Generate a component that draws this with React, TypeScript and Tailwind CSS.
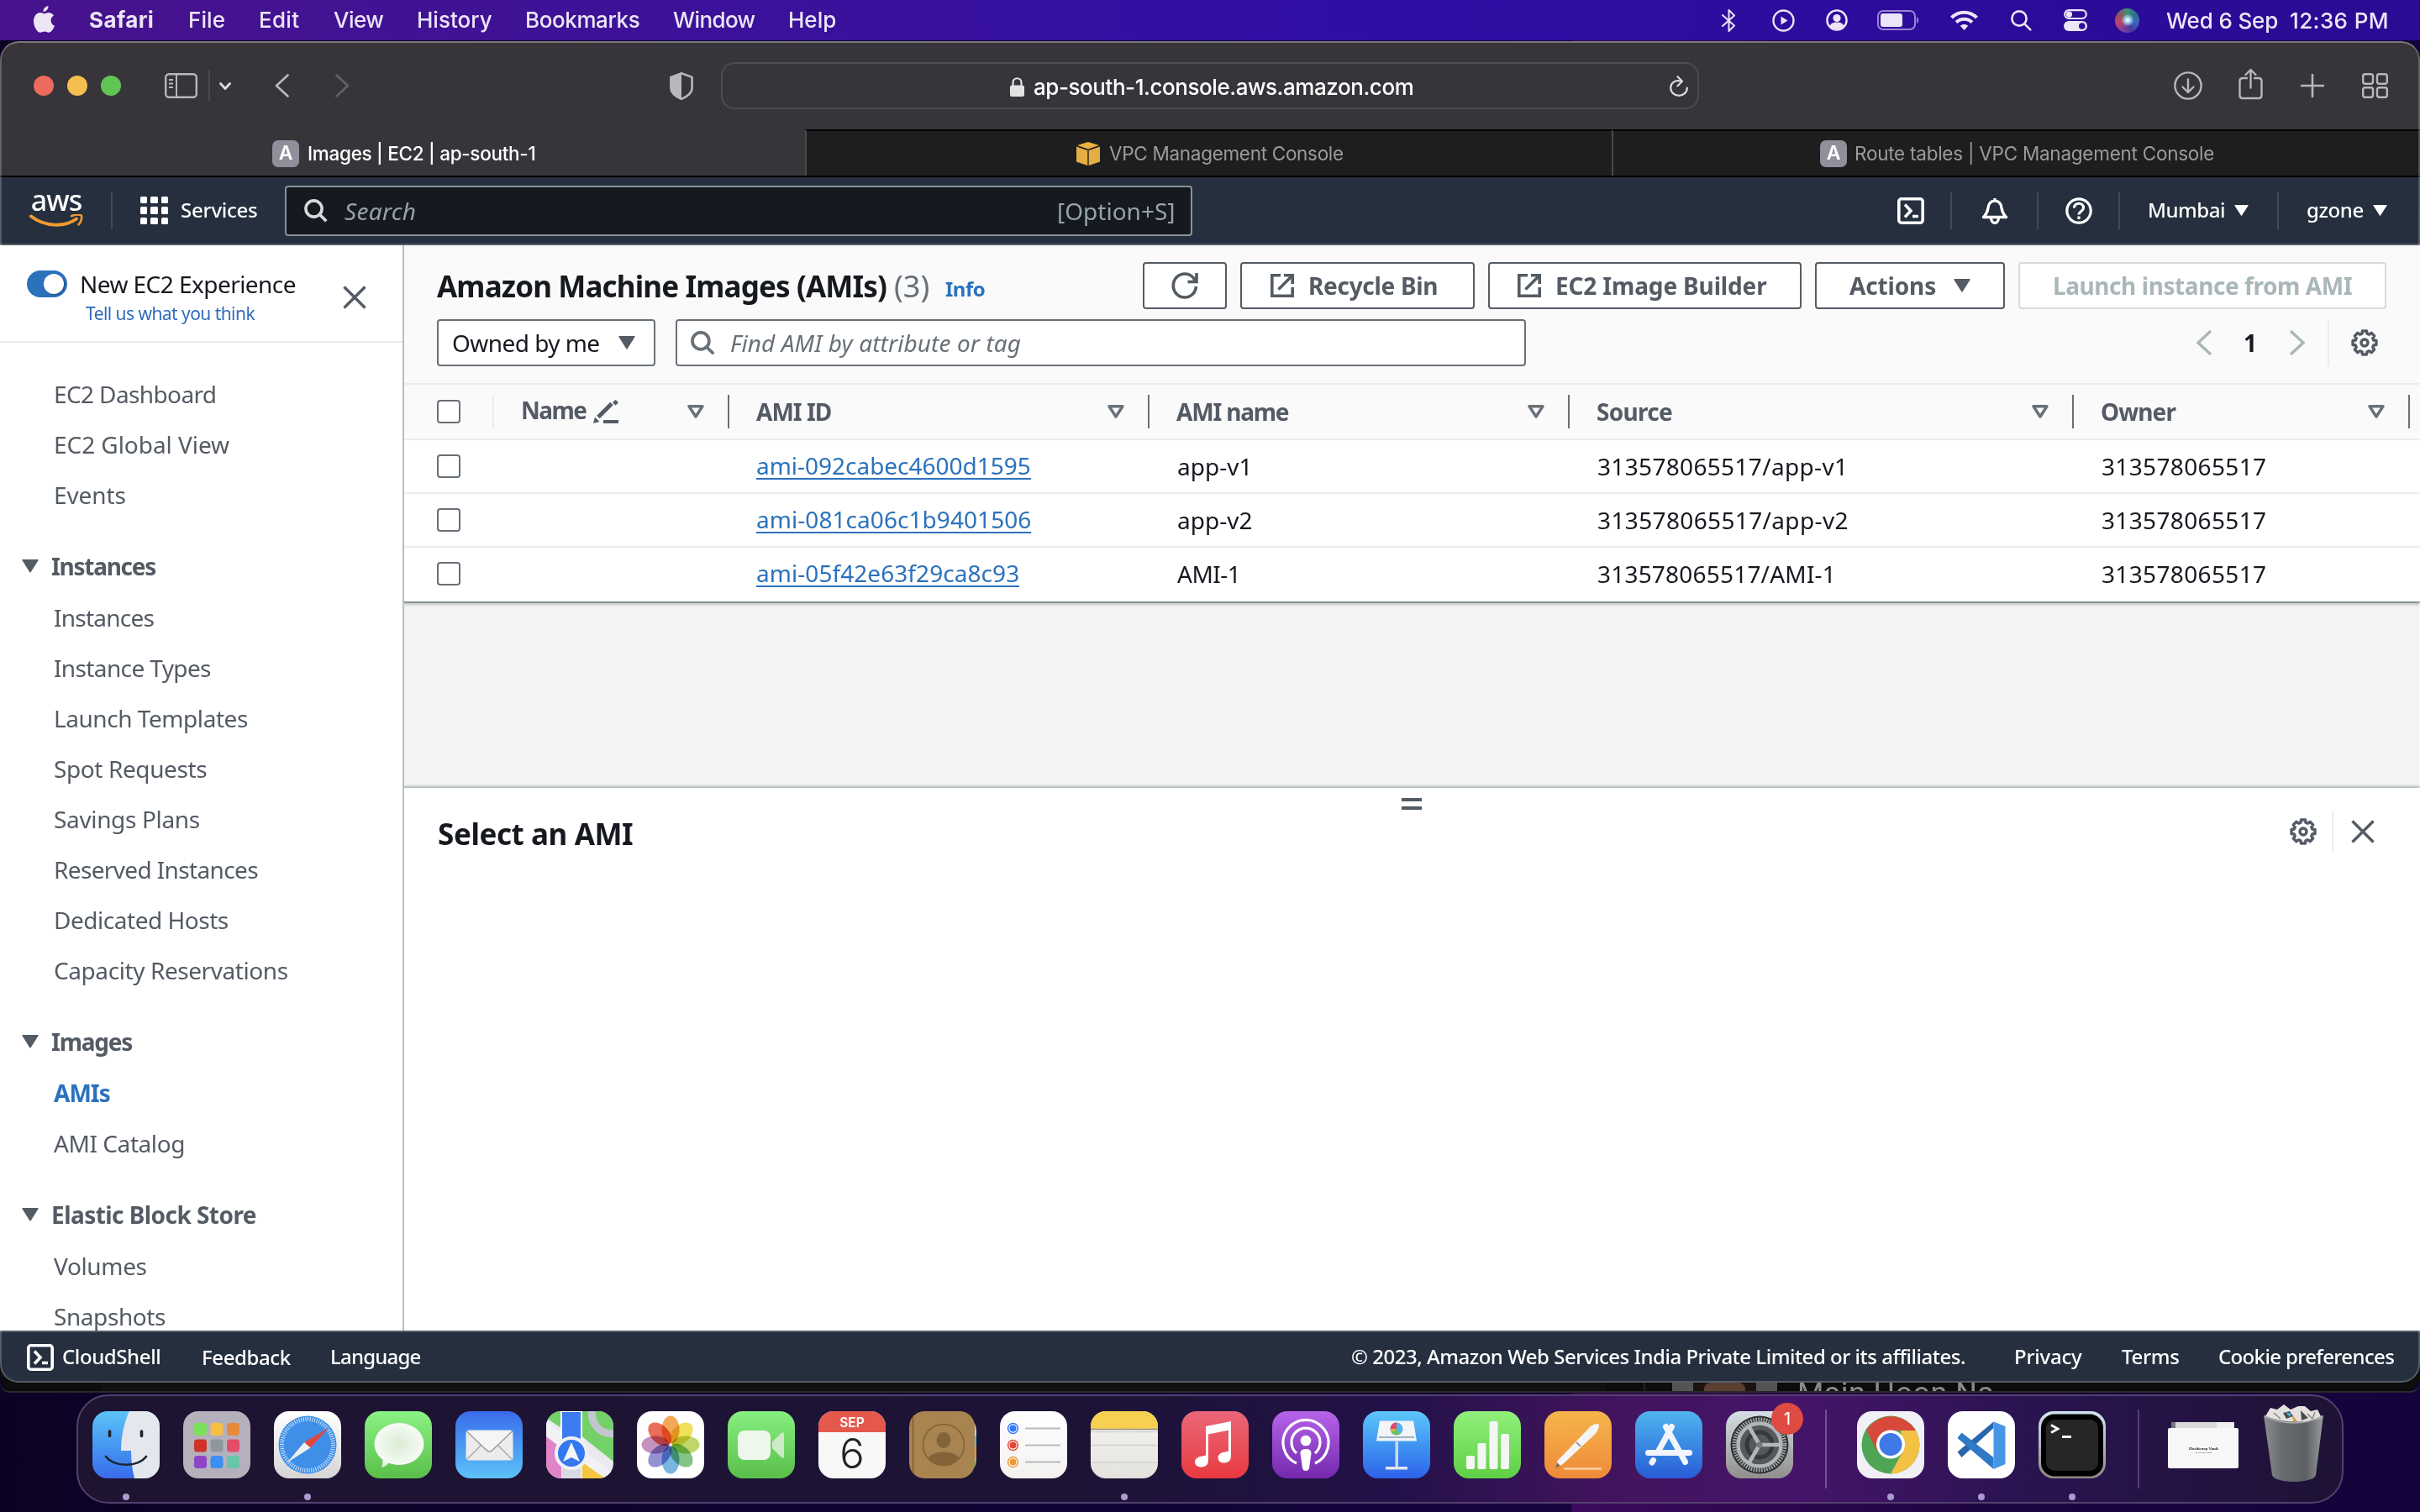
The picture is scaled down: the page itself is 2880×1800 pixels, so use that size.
import React from "react";

const EMBER = "font-['Noto_Sans','Open_Sans',sans-serif]";
const SYS = "font-['Inter','Liberation_Sans',sans-serif]";

function T({ c = "", children }: { c?: string; children: React.ReactNode }) {
  return <span className={"block shrink-0 whitespace-nowrap " + c}>{children}</span>;
}

function Down({ c = "" }: { c?: string }) {
  return (
    <svg viewBox="0 0 20 16" className={"shrink-0 " + c} fill="currentColor" preserveAspectRatio="none">
      <path d="M1 0h18q1 0 .6 1L10.8 15q-.8 1.600-1.600 0L.4 1Q0 0 1 0z" />
    </svg>
  );
}

/* ---------- desktop menu bar ---------- */
function MenuBar() {
  return (
    <div className={"flex h-[48px] shrink-0 items-center bg-linear-to-r from-[#47128c] via-[#300da5] via-55% to-[#2a0a93] pb-[2px] text-[26px] font-medium text-[#ebe5f6] " + SYS}>
      <svg viewBox="0 0 25 32" className="ml-[40px] h-[32px] w-[25px]" fill="currentColor">
        <path d="M17.500 0c.2 3.800-2.900 7-6 7C11.200 3.500 14.300.4 17.500 0zM12.800 9.200c1.200 0 2.800-1.300 5.200-1.300 2.200 0 4.600 1.200 6 3.500-5 2.900-4.300 10 1 12.300-1.500 4-4.200 8-7 8-2 0-2.900-1.200-5-1.200-2.200 0-3.200 1.200-5 1.200C4 31.700 0 24.500 0 18.500 0 12 4 8 8 8c2.100 0 3.700 1.200 4.800 1.200z" />
      </svg>
      <div className="ml-[41px] flex gap-[39px] pt-[1px]">
        <T c="w-[79px] font-bold tracking-[0.400px]">Safari</T>
        <T c="w-[45px] tracking-[0.100px]">File</T>
        <T c="w-[50px] tracking-[0.300px]">Edit</T>
        <T c="w-[60px] tracking-[-0.500px]">View</T>
        <T c="w-[90px]">History</T>
        <T c="w-[137px] tracking-[-0.400px]">Bookmarks</T>
        <T c="w-[98px] tracking-[-0.600px]">Window</T>
        <T c="w-[58px]">Help</T>
      </div>
      <div className="ml-auto flex items-center pr-[37px] pt-[2px]">
        <svg viewBox="0 0 17 27" className="h-[27px] w-[17px]" fill="none" stroke="currentColor" strokeWidth="2" strokeLinejoin="round" strokeLinecap="round"><path d="M1 7l14 12.500L8.500 26V1L15 7.500 1 20" /></svg>
        <svg viewBox="0 0 27 27" className="ml-[43px] size-[27px]" fill="none" stroke="currentColor" strokeWidth="2.400"><circle cx="13.500" cy="13.500" r="12" /><path d="M10.500 8.500v10l8-5z" fill="currentColor" stroke="none" /></svg>
        <svg viewBox="0 0 26 26" className="ml-[37px] size-[26px]" fill="none" stroke="currentColor" strokeWidth="2.400"><circle cx="13" cy="13" r="11.600" /><circle cx="13" cy="10.500" r="4.600" fill="currentColor" stroke="none" /><path d="M4.500 20c2-4 5-4.500 8.500-4.500s6.500.5 8.500 4.500c-4 5-13 5-17 0z" fill="currentColor" stroke="none" /></svg>
        <svg viewBox="0 0 50 24" className="ml-[35px] h-[24px] w-[50px]" fill="none"><rect x="1" y="1" width="44" height="22" rx="6" stroke="#9b84d4" strokeWidth="2" /><rect x="4" y="4" width="26" height="16" rx="3" fill="currentColor" /><path d="M47 8c3 1.500 3 6.500 0 8z" fill="#9b84d4" /></svg>
        <svg viewBox="0 0 33 24" className="ml-[37px] h-[24px] w-[33px]" fill="none" stroke="currentColor" strokeWidth="4"><path d="M1.500 9C10 .5 23 .5 31.500 9" /><path d="M7 14.500c5.500-5 13.500-5 19 0" /><path d="M16.500 24l-4.700-5.200c2.700-2.300 6.700-2.300 9.400 0z" fill="currentColor" stroke="none" /></svg>
        <svg viewBox="0 0 25 25" className="ml-[39px] size-[25px]" fill="none" stroke="currentColor" strokeWidth="2.600" strokeLinecap="round"><circle cx="10" cy="10" r="8.600" /><path d="M16.300 16.300l7 7" /></svg>
        <svg viewBox="0 0 28 26" className="ml-[38px] h-[26px] w-[28px]" fill="none"><rect x="1.200" y="1.200" width="25.600" height="9.800" rx="4.900" stroke="currentColor" strokeWidth="2.200" /><circle cx="6.500" cy="6.100" r="3.600" fill="currentColor" /><rect y="14" width="28" height="12" rx="6" fill="currentColor" /><circle cx="21.800" cy="20" r="3.800" fill="#2d0c99" /></svg>
        <div className="ml-[33px] size-[29px] rounded-full bg-[radial-gradient(circle_at_52%_48%,#fff_0%,#a9d8ee_14%,transparent_36%),conic-gradient(from_0deg,#3f8f76,#2d6f86,#3a63c4,#473a9c,#7d3f9e,#c2416a,#8c5560,#3f8f76)]" />
        <T c="ml-[32px] w-[134px] tracking-[-0.150px]">Wed 6 Sep</T>
        <T c="ml-[13px] w-[118px] tracking-[0.400px]">12:36 PM</T>
      </div>
    </div>
  );
}

/* ---------- browser chrome ---------- */
function Toolbar() {
  return (
    <div className={"flex h-[104px] shrink-0 items-center text-[#b9b7bc] " + SYS}>
      <div className="ml-[40px] flex gap-[16px]">
        <div className="size-[24px] rounded-full bg-[#ec6a5e]" />
        <div className="size-[24px] rounded-full bg-[#f4bf4f]" />
        <div className="size-[24px] rounded-full bg-[#61c554]" />
      </div>
      <svg viewBox="0 0 39 30" className="ml-[52px] h-[30px] w-[39px]" fill="none" stroke="currentColor" strokeWidth="2.400"><rect x="1.200" y="1.200" width="36.600" height="27.600" rx="4" /><path d="M14 1v28M5 8h5M5 12.500h5M5 17h5" strokeWidth="2" /></svg>
      <div className="ml-[13px] h-[36px] w-[2px] bg-[#4c4a4f]" />
      <svg viewBox="0 0 14 9" className="ml-[11px] h-[9px] w-[14px]" fill="none" stroke="#dddbe0" strokeWidth="2.800" strokeLinecap="round" strokeLinejoin="round"><path d="M1.500 1.500L7 7.500l5.500-6" /></svg>
      <svg viewBox="0 0 17 28" className="ml-[52px] h-[28px] w-[17px]" fill="none" stroke="currentColor" strokeWidth="2.600" strokeLinecap="round" strokeLinejoin="round"><path d="M15.500 1.500L2 14l13.500 12.500" /></svg>
      <svg viewBox="0 0 17 28" className="ml-[55px] h-[28px] w-[17px] text-[#636166]" fill="none" stroke="currentColor" strokeWidth="2.600" strokeLinecap="round" strokeLinejoin="round"><path d="M1.500 1.500L15 14 1.500 26.500" /></svg>
      <svg viewBox="0 0 28 33" className="ml-[381px] h-[33px] w-[28px]" fill="none"><path d="M14 1.300l12.600 4.600v13c0 6-6 10-12.600 13-6.600-3-12.600-7-12.600-13v-13z" stroke="currentColor" strokeWidth="2.600" strokeLinejoin="round" /><path d="M14 1.300v30.600c-6.600-3-12.600-7-12.600-13v-13z" fill="currentColor" /></svg>
      <div className="ml-[33px] flex h-[56px] w-[1164px] items-center rounded-[16px] border-2 border-[#4e4c51]">
        <svg viewBox="0 0 17 23" className="ml-[342px] mt-[2px] h-[23px] w-[17px] text-[#e3e2e4]" fill="none"><rect y="9.500" width="17" height="13.500" rx="2.500" fill="currentColor" /><path d="M3.500 10V6.500c0-7 10-7 10 0V10" stroke="currentColor" strokeWidth="2.200" /></svg>
        <T c="ml-[11px] w-[452px] pt-[3px] text-[26px] font-medium tracking-[-0.450px] text-white">ap-south-1.console.aws.amazon.com</T>
        <svg viewBox="0 0 22 25" className="ml-auto mr-[11px] h-[25px] w-[22px] text-[#dcdadf]" fill="none" stroke="currentColor" strokeWidth="2.200" strokeLinecap="round" strokeLinejoin="round"><path d="M13 6.500C6 4.800 1.200 9 1.200 14.500c0 5.200 4.300 9.300 9.800 9.300s9.800-4.100 9.800-9.300M9.500 1.200l5.500 5.600-5.500 5.500" /></svg>
      </div>
      <div className="ml-auto flex items-center pr-[38px]">
        <svg viewBox="0 0 34 34" className="size-[34px]" fill="none" stroke="currentColor" strokeWidth="2.400" strokeLinecap="round" strokeLinejoin="round"><circle cx="17" cy="17" r="15.600" /><path d="M17 9.500v15M10.500 18.500l6.500 6.500 6.500-6.500" /></svg>
        <svg viewBox="0 0 29 38" className="mb-[5px] ml-[43px] h-[38px] w-[29px]" fill="none" stroke="currentColor" strokeWidth="2.400" strokeLinecap="round" strokeLinejoin="round"><path d="M10 12H5q-3.500 0-3.500 3.500v17Q1.500 36 5 36h19q3.500 0 3.500-3.500v-17Q27.500 12 24 12h-5M14.500 23.500V2M8.500 8l6-6 6 6" /></svg>
        <svg viewBox="0 0 28 28" className="ml-[45px] size-[28px]" fill="none" stroke="currentColor" strokeWidth="2.600" strokeLinecap="round"><path d="M14 1v26M1 14h26" /></svg>
        <svg viewBox="0 0 31 30" className="ml-[45px] h-[30px] w-[31px]" fill="none" stroke="currentColor" strokeWidth="2.400"><rect x="1.200" y="1.200" width="11.800" height="11.600" rx="2.500" /><rect x="18" y="1.200" width="11.800" height="11.600" rx="2.500" /><rect x="1.200" y="17.200" width="11.800" height="11.600" rx="2.500" /><rect x="18" y="17.200" width="11.800" height="11.600" rx="2.500" /></svg>
      </div>
    </div>
  );
}

function Letter() {
  return <div className="flex size-[32px] items-center justify-center rounded-[7px] bg-[#90909c] text-[23px] font-semibold leading-none text-white">A</div>;
}

function Tabs() {
  return (
    <div className={"flex h-[57px] shrink-0 border-b-2 border-black text-[22.500px] " + SYS}>
      <div className="flex w-[958px] items-center gap-[10px] pl-[324px] pt-[2px] font-medium text-white">
        <Letter />
        <T c="w-[273px] tracking-[-0.300px]">Images | EC2 | ap-south-1</T>
      </div>
      <div className="flex w-[960px] items-center border-l-2 border-t-2 border-l-[#4a484d] border-t-black bg-[#1e1e1f] pl-[321px] text-[#9b9b9c]">
        <svg viewBox="0 0 28 28" className="size-[28px]" strokeLinejoin="round"><path d="M14 0l13 4-13 4.500L1 4z" fill="#edb13f" /><path d="M0 5.500L13 10v18L0 23.500zM28 5.500L15 10v18l13-4.500z" fill="#e5ae44" /><path d="M14 8.500V28" stroke="#7a5a1e" strokeWidth="1.500" /></svg>
        <T c="ml-[11px] w-[281px] tracking-[-0.300px]">VPC Management Console</T>
      </div>
      <div className="flex w-[962px] items-center border-l-2 border-t-2 border-l-[#4a484d] border-t-black bg-[#1e1e1f] pl-[246px] text-[#9b9b9c]">
        <Letter />
        <T c="ml-[9px] w-[431px] tracking-[-0.250px]">Route tables | VPC Management Console</T>
      </div>
    </div>
  );
}

/* ---------- AWS console ---------- */
function ShellIcon({ c = "" }: { c?: string }) {
  return (
    <svg viewBox="0 0 32 32" className={"size-[32px] shrink-0 " + c} fill="none" stroke="currentColor" strokeWidth="3.600">
      <rect x="1.800" y="1.800" width="28.400" height="28.400" rx="3" /><path d="M9 8.500l7 7.500-7 7.500M18 22.500h7" />
    </svg>
  );
}

function SearchGlyph({ c = "" }: { c?: string }) {
  return (
    <svg viewBox="0 0 28 28" className={"shrink-0 " + c} fill="none" stroke="currentColor" strokeWidth="3.600"><circle cx="11.500" cy="11.500" r="9.600" /><path d="M18.300 18.300l8 8" /></svg>
  );
}

function Sep({ c = "" }: { c?: string }) {
  return <div className={"h-[44px] w-[2px] shrink-0 bg-[#414b57] " + c} />;
}

function AwsNav() {
  return (
    <div className={"flex h-[81px] shrink-0 items-center border-b-2 border-[#545b66] bg-[#252f3e] text-[24px] font-medium text-white " + EMBER}>
      <div className="ml-[35px] flex w-[64px] flex-col items-center">
        <span className="h-[22px] text-[34px] font-medium leading-[16px] tracking-[-1px]">aws</span>
        <svg viewBox="0 0 64 16" className="mt-[3px] h-[16px] w-[64px]" fill="none"><path d="M2 2.500C18 15 42 16 56 5.500" stroke="#f09a30" strokeWidth="4" strokeLinecap="round" /><path d="M50 2.200c4-1.800 9-2 12-.6.5 4-.7 7.800-3.500 10.700" stroke="#f09a30" strokeWidth="2.600" strokeLinecap="round" strokeLinejoin="round" /></svg>
      </div>
      <Sep c="ml-[33px]" />
      <div className="ml-[33px] grid size-[33px] grid-cols-3 gap-[4px]">
        {[0, 1, 2, 3, 4, 5, 6, 7, 8].map((i) => <div key={i} className="rounded-[1.500px] bg-white" />)}
      </div>
      <T c="ml-[15px] w-[92px] pb-[2px] tracking-[-0.250px]">Services</T>
      <div className="ml-[32px] flex h-[60px] w-[1080px] items-center rounded-[4px] border-2 border-[#879596] bg-[#16191f] text-[28px] font-normal text-[#95a5a6]">
        <SearchGlyph c="ml-[21px] size-[28px] text-[#d5dbdb]" />
        <T c="ml-[20px] w-[86px] italic tracking-[0.300px]">Search</T>
        <T c="ml-auto mr-[17px] w-[142px]">[Option+S]</T>
      </div>
      <div className="ml-auto flex items-center pr-[39px]">
        <ShellIcon />
        <Sep c="ml-[31px]" />
        <svg viewBox="0 0 32 32" className="ml-[35px] size-[32px]" fill="none" stroke="currentColor" strokeWidth="3.400" strokeLinejoin="round"><path d="M16 1v3M2.500 23.500c4-4 5-7 5.500-11C8.500 7 12 4 16 4s7.500 3 8 8.500c.5 4 1.500 7 5.500 11zM11.500 24c0 8.500 9 8.500 9 0" /></svg>
        <Sep c="ml-[34px]" />
        <svg viewBox="0 0 32 32" className="ml-[32px] size-[32px]" fill="none" stroke="currentColor" strokeWidth="3.200"><circle cx="16" cy="16" r="14.200" /><path d="M10.500 12.500c0-7 11-7 11 0 0 4-5.500 4-5.500 8M16 22.500v3.500" /></svg>
        <Sep c="ml-[31px]" />
        <T c="ml-[33px] w-[92px] pb-[2px] tracking-[-0.500px]">Mumbai</T>
        <Down c="ml-[11px] h-[13px] w-[17px]" />
        <Sep c="ml-[34px]" />
        <T c="ml-[33px] w-[69px] pb-[2px] tracking-[-0.400px]">gzone</T>
        <Down c="ml-[10px] h-[13px] w-[17px]" />
      </div>
    </div>
  );
}

function Cross({ c = "" }: { c?: string }) {
  return <svg viewBox="0 0 28 28" className={"size-[28px] shrink-0 " + c} fill="none" stroke="#545b64" strokeWidth="3.400"><path d="M1.500 1.500l25 25M26.500 1.500l-25 25" /></svg>;
}

const gearPath = (() => {
  let d = "";
  for (let i = 0; i < 8; i++) {
    const a = (i * Math.PI) / 4 - Math.PI / 2;
    const pt = (r: number, o: number) => `${(16 + r * Math.cos(a + o)).toFixed(2)} ${(16 + r * Math.sin(a + o)).toFixed(2)}`;
    d += `${i ? "L" : "M"}${pt(11.2, -0.27)}L${pt(14.2, -0.18)}L${pt(14.2, 0.18)}L${pt(11.2, 0.27)}`;
  }
  return d + "Z";
})();

function Gear({ c = "" }: { c?: string }) {
  return (
    <svg viewBox="0 0 32 32" className={"size-[32px] shrink-0 " + c} fill="none" stroke="#545b64" strokeWidth="3.400" strokeLinejoin="round"><path d={gearPath} /><circle cx="16" cy="16" r="4" /></svg>
  );
}

function SideHead({ c, label }: { c: string; label: string }) {
  return (
    <div className="flex h-[60px] items-center pl-[26px] font-bold">
      <Down c="h-[16px] w-[20px]" />
      <T c={"ml-[15px] " + c}>{label}</T>
    </div>
  );
}

function SideItems({ items }: { items: [string, string][] }) {
  return (
    <>
      {items.map(([label, c]) => (
        <div key={label} className="flex h-[60px] items-center pb-[2px] pl-[64px]"><T c={c}>{label}</T></div>
      ))}
    </>
  );
}

function Sidebar() {
  return (
    <div className="z-10 flex w-[481px] shrink-0 flex-col overflow-hidden border-r-2 border-[#b9bfc3] bg-white text-[28px] text-[#545b64]">
      <div className="flex h-[116px] shrink-0 border-b-2 border-[#eaeded]">
        <div className="ml-[32px] mt-[30px] flex h-[32px] w-[48px] justify-end rounded-full bg-[#2b72bd] p-[4px]"><div className="size-[24px] rounded-full bg-white shadow-[1px_1px_2px_#0006]" /></div>
        <div className="ml-[15px] mt-[26px]">
          <T c="w-[258px] leading-[40px] tracking-[-0.550px] text-[#16191f]">New EC2 Experience</T>
          <T c="ml-[7px] w-[201px] text-[21px] leading-[30px] tracking-[-0.550px] text-[#2f6bbd]">Tell us what you think</T>
        </div>
        <Cross c="ml-[55px] mt-[48px]" />
      </div>
      <div className="shrink-0 pt-[32px]">
        <SideItems items={[["EC2 Dashboard", "tracking-[-0.620px]"], ["EC2 Global View", "tracking-[-0.050px]"], ["Events", "tracking-[-0.100px]"]]} />
        <div className="h-[24px]" />
        <SideHead label="Instances" c="tracking-[-1.280px]" />
        <div className="h-[2px]" />
        <SideItems items={[["Instances", "tracking-[-0.750px]"], ["Instance Types", "tracking-[-0.620px]"], ["Launch Templates", "tracking-[-0.450px]"], ["Spot Requests", "tracking-[-0.400px]"], ["Savings Plans", "tracking-[-0.350px]"], ["Reserved Instances", "tracking-[-0.640px]"], ["Dedicated Hosts", "tracking-[-0.470px]"], ["Capacity Reservations", "tracking-[-0.420px]"]]} />
        <div className="h-[24px]" />
        <SideHead label="Images" c="tracking-[-1.240px]" />
        <div className="h-[2px]" />
        <SideItems items={[["AMIs", "tracking-[-1px] font-bold text-[#2b72bd]"], ["AMI Catalog", "tracking-[-0.430px]"]]} />
        <div className="h-[24px]" />
        <SideHead label="Elastic Block Store" c="tracking-[-0.550px]" />
        <div className="h-[2px]" />
        <SideItems items={[["Volumes", "tracking-[-0.350px]"], ["Snapshots", "tracking-[-0.420px]"]]} />
      </div>
    </div>
  );
}

function External() {
  return <svg viewBox="0 0 28 28" className="size-[28px] shrink-0" fill="none" stroke="currentColor" strokeWidth="3.600"><path d="M12 1.800H1.800v24.400h24.400V16M16 1.800h10.200V12M26 2L9.500 18.500" /></svg>;
}

function Btn({ c, children }: { c: string; children: React.ReactNode }) {
  return <div className={"flex h-[56px] shrink-0 items-center rounded-[4px] border-2 bg-white text-[28px] font-bold " + c}>{children}</div>;
}

function Box() {
  return <div className="size-[28px] rounded-[4px] border-2 border-[#687078] bg-white" />;
}

function HeadCell({ w, c, label }: { w: string; c: string; label: string }) {
  return (
    <div className={"flex items-center " + w}>
      <T c={c}>{label}</T>
      {label === "Name" && (
        <svg viewBox="0 0 30 28" className="ml-[8px] h-[28px] w-[30px]" fill="none" stroke="currentColor"><path d="M6 20.500L22 4.500" strokeWidth="5" /><path d="M23.500 3.200l3-3 3 3-3 3z" fill="currentColor" strokeWidth="1" /><path d="M0 28l2-7.500 5.500 5.500z" fill="currentColor" stroke="none" /><path d="M12 26h18" strokeWidth="4" /></svg>
      )}
      <svg viewBox="0 0 20 16" className="ml-auto mr-[28px] h-[16px] w-[20px]" fill="none" stroke="#687078" strokeWidth="3.400" strokeLinejoin="round"><path d="M2 1.700h16L10 14z" /></svg>
      <div className="h-[40px] w-[2px] bg-[#687078]" />
    </div>
  );
}

type AmiRow = { id: string; idc: string; name: string; nc: string; src: string; sc: string; last?: boolean };

function Row({ id, idc, name, nc, src, sc, last }: AmiRow) {
  return (
    <div className={"flex shrink-0 items-center border-b-2 bg-white text-[#16191f] " + (last ? "h-[66px] border-[#879596] pb-[2px] shadow-[0_2px_3px_#0003]" : "h-[64px] border-[#eaeded]")}>
      <div className="w-[419px] pl-[39px]"><Box /></div>
      <div className="w-[501px]"><T c={"w-max border-b-2 border-[#2b72bd] pt-[1px] leading-[29px] text-[#2b72bd] " + idc}>{id}</T></div>
      <div className="w-[500px]"><T c={nc}>{name}</T></div>
      <div className="w-[600px]"><T c={sc}>{src}</T></div>
      <T c="tracking-[0.350px]">313578065517</T>
    </div>
  );
}

function Main() {
  return (
    <div className="flex flex-1 flex-col bg-[#f2f3f3] text-[28px] text-[#545b64]">
      <div className="h-[166px] shrink-0 border-b-2 border-[#eaeded] bg-[#fafafa]">
        <div className="flex h-[76px] items-end">
          <T c="ml-[39px] w-[536px] text-[35px] font-bold leading-[54px] tracking-[-0.850px] text-[#16191f]">Amazon Machine Images (AMIs)</T>
          <T c="ml-[8px] w-[48px] text-[36px] leading-[54px] text-[#687078]">(3)</T>
          <T c="ml-[13px] w-[48px] pb-[4px] text-[24px] font-bold leading-[40px] tracking-[-0.500px] text-[#2b72bd]">Info</T>
          <div className="ml-auto flex gap-[16px] pr-[40px]">
            <Btn c="w-[100px] justify-center border-[#545b64]"><svg viewBox="0 0 32 32" className="size-[32px]" fill="none" stroke="currentColor" strokeWidth="3.600"><path d="M29.500 17c-.6 7.500-6.300 13-13.500 13C8.300 30 2.300 23.800 2.300 16S8.300 2 16 2c5.500 0 10 3 12.500 8.500M30 1v10.500H19.500" /></svg></Btn>
            <Btn c="w-[279px] border-[#545b64] pl-[34px]"><External /><T c="ml-[17px] w-[155px] tracking-[-0.300px]">Recycle Bin</T></Btn>
            <Btn c="w-[373px] border-[#545b64] pl-[33px]"><External /><T c="ml-[17px] w-[253px] tracking-[-0.150px]">EC2 Image Builder</T></Btn>
            <Btn c="w-[226px] border-[#545b64] pl-[39px]"><T c="w-[104px] tracking-[-0.150px]">Actions</T><Down c="ml-[20px] h-[16px] w-[20px]" /></Btn>
            <Btn c="w-[438px] border-[#d5dbdb] pl-[39px] text-[#aab7b8]"><T c="w-[357px] tracking-[-0.430px]">Launch instance from AMI</T></Btn>
          </div>
        </div>
        <div className="mt-[12px] flex items-center">
          <div className="ml-[39px] flex h-[56px] w-[260px] items-center rounded-[4px] border-2 border-[#687078] bg-white pl-[16px] text-[#16191f]">
            <T c="w-[176px] tracking-[-0.550px]">Owned by me</T>
            <Down c="ml-[22px] h-[16px] w-[20px] text-[#545b64]" />
          </div>
          <div className="ml-[24px] flex h-[56px] w-[1012px] items-center rounded-[4px] border-2 border-[#687078] bg-white pl-[16px] text-[#687078]">
            <SearchGlyph c="size-[29px]" />
            <T c="ml-[18px] w-[347px] italic tracking-[0.100px]">Find AMI by attribute or tag</T>
          </div>
          <div className="ml-auto flex items-center pr-[50px]">
            <svg viewBox="0 0 20 30" className="h-[30px] w-[20px]" fill="none" stroke="#aab7b8" strokeWidth="3.400"><path d="M18 1L3 15l15 14" /></svg>
            <T c="ml-[37px] w-[16px] font-bold text-[#16191f]">1</T>
            <svg viewBox="0 0 20 30" className="ml-[38px] h-[30px] w-[20px]" fill="none" stroke="#aab7b8" strokeWidth="3.400"><path d="M2 1l15 14L2 29" /></svg>
            <div className="ml-[26px] h-[56px] w-[2px] bg-[#eaeded]" />
            <Gear c="ml-[26px]" />
          </div>
        </div>
      </div>
      <div className="flex h-[66px] shrink-0 items-center border-b-2 border-[#eaeded] bg-[#fafafa] font-bold">
        <div className="flex w-[107px] items-center justify-between pl-[39px]"><Box /><div className="h-[40px] w-[2px] bg-[#eaeded]" /></div>
        <HeadCell w="w-[280px] pl-[32px]" c="w-[78px] pb-[4px] tracking-[-1.500px]" label="Name" />
        <HeadCell w="w-[500px] pl-[32px]" c="w-[90px] tracking-[-1px]" label="AMI ID" />
        <HeadCell w="w-[500px] pl-[32px]" c="w-[134px] tracking-[-1.200px]" label="AMI name" />
        <HeadCell w="w-[600px] pl-[32px]" c="w-[91px] tracking-[-0.700px]" label="Source" />
        <HeadCell w="w-[400px] pl-[32px]" c="w-[90px] tracking-[-0.900px]" label="Owner" />
      </div>
      <Row id="ami-092cabec4600d1595" idc="tracking-[-0.020px]" name="app-v1" nc="" src="313578065517/app-v1" sc="tracking-[0.330px]" />
      <Row id="ami-081ca06c1b9401506" idc="tracking-[0.060px]" name="app-v2" nc="" src="313578065517/app-v2" sc="tracking-[0.360px]" />
      <Row id="ami-05f42e63f29ca8c93" idc="tracking-[0.060px]" name="AMI-1" nc="tracking-[-0.500px]" src="313578065517/AMI-1" sc="tracking-[0.200px]" last />
      <div className="flex-1" />
      <div className="h-[648px] shrink-0 border-t-2 border-[#bcc3c5] bg-white shadow-[0_-1px_2px_#0002]">
        <div className="ml-[1187px] mt-[12px] h-[14px] w-[24px] border-y-4 border-[#545b64]" />
        <div className="flex h-[52px] items-center">
          <T c="ml-[40px] pt-[6px] text-[35px] font-bold tracking-[-0.400px] text-[#16191f]">Select an AMI</T>
          <Gear c="ml-auto" />
          <div className="ml-[18px] h-[48px] w-[2px] bg-[#eaeded]" />
          <Cross c="ml-[21px] mr-[54px]" />
        </div>
      </div>
    </div>
  );
}

function Footer() {
  return (
    <div className={"flex h-[62px] shrink-0 items-center border-t-2 border-[#545b66] bg-[#252f3e] text-[24px] font-medium text-white " + EMBER}>
      <ShellIcon c="ml-[32px]" />
      <T c="ml-[10px] w-[118px] pb-[2px] tracking-[-0.400px]">CloudShell</T>
      <T c="ml-[48px] w-[106px] tracking-[-0.400px]">Feedback</T>
      <T c="ml-[47px] w-[108px] pb-[2px] tracking-[-0.800px]">Language</T>
      <T c="ml-auto w-[732px] pb-[2px] tracking-[-0.490px]">© 2023, Amazon Web Services India Private Limited or its affiliates.</T>
      <T c="ml-[57px] w-[81px] pb-[2px] tracking-[-0.250px]">Privacy</T>
      <T c="ml-[47px] w-[69px] pb-[2px] tracking-[-0.300px]">Terms</T>
      <T c="ml-[46px] mr-[30px] w-[210px] pb-[2px] tracking-[-0.650px]">Cookie preferences</T>
    </div>
  );
}

/* ---------- dock ---------- */
function App80({ c, dot, children }: { c: string; dot?: boolean; children: React.ReactNode }) {
  return (
    <div className="relative mr-[28px] flex shrink-0 flex-col items-center">
      <svg viewBox="0 0 80 80" className={"size-[80px] rounded-[18px] " + c}>{children}</svg>
      {dot && <div className="mt-[18px] size-[8px] rounded-full bg-[#ac9bd0]" />}
    </div>
  );
}

const pads = ["#7be05a", "#f5bf45", "#e58a3a", "#cf3327", "#8d979c", "#e44d68", "#8d47c6", "#3b8ff0", "#67c6a8"];
const petals = ["#f09a37", "#ecd93c", "#b3cf50", "#6fbb72", "#62a8dc", "#8080cb", "#b87fb3", "#e8553d"];

function Dock() {
  return (
    <div className="mx-[91px] flex h-[130px] shrink-0 items-start rounded-[38px] border-2 border-[#54406e] bg-[linear-gradient(90deg,#1e1330_0%,#1d1336_45%,#221148_58%,#43145e_68%,#45146a_76%,#2a1450_86%,#1e1235_100%)] pl-[17px] pt-[18px]">
      <App80 dot c="bg-linear-to-b from-[#5cc3f7] to-[#3a6bea]">
        <path d="M44 0h36v80H50Q46 64 46 47H34C34 30 38 12 44 0z" fill="#e4e8ee" />
        <path d="M20.500 24v5.500M58.500 24v5.500" stroke="#222" strokeWidth="3.600" strokeLinecap="round" /><path d="M16 54c10 13 38 13 48 0" fill="none" stroke="#1d2430" strokeWidth="2.600" strokeLinecap="round" />
      </App80>
      <App80 c="bg-[#b4b1bd]">{pads.map((p, i) => <rect key={p} x={13 + (i % 3) * 19.5} y={14 + Math.floor(i / 3) * 19.5} width="15" height="15" rx="3.500" fill={p} />)}</App80>
      <App80 dot c="bg-linear-to-b from-white to-[#d6d6d6]">
        <circle cx="40" cy="40" r="34.500" fill="#3f8fe8" /><circle cx="40" cy="40" r="30.500" fill="none" stroke="#fff" strokeOpacity=".75" strokeWidth="5" strokeDasharray="1 1.660" />
        <path d="M65 20L43.500 43.500 36 37z" fill="#e2463c" /><path d="M16 61l20-24 7.500 6.500z" fill="#eef0f2" />
      </App80>
      <App80 c="bg-linear-to-b from-[#8af284] to-[#5abf49]">
        <defs><radialGradient id="bub"><stop offset="0" stopColor="#d9ecd3" /><stop offset="1" stopColor="#f7fbf6" /></radialGradient></defs>
        <path d="M21 58q1 5-1 9 6-1.500 9-6z" fill="#e4f3e0" /><ellipse cx="41" cy="39" rx="29.500" ry="25" fill="url(#bub)" />
      </App80>
      <App80 c="bg-linear-to-b from-[#3b6bea] to-[#5fc1f8]">
        <rect x="12.500" y="22.500" width="56" height="36" rx="4" fill="#ececec" /><path d="M14 57l19-19M67 57L48 38" stroke="#aaa" strokeWidth="1.500" /><path d="M13.500 24l23 22q4 4 8 0l23-22" fill="#f5f5f5" stroke="#9c9c9c" strokeWidth="1.500" />
      </App80>
      <App80 c="bg-[#e9eaee]">
        <path d="M0 0h18v20L0 8zM40 0h40v60L40 28z" fill="#74d069" /><path d="M0 30l18 14v36H0z" fill="#df84c8" /><path d="M43 60l32 20H43z" fill="#f4c63f" /><path d="M0 12l80 62v6H70L0 30z" fill="#f2f2f5" /><path d="M54 0c0 16 10 28 28 27" stroke="#c3c6cf" strokeWidth="9" fill="none" /><path d="M18 0h24v34H18z" fill="#3c7cf0" stroke="#fff" strokeWidth="2" /><path d="M19 62h22v18H19z" fill="#d9dbe2" />
        <circle cx="30" cy="50" r="18" fill="#3478f0" stroke="#f0f1f5" strokeWidth="4" /><path d="M30 37l10 23-10-5-10 5z" fill="#f4f6fa" />
      </App80>
      <App80 c="bg-white">
        {petals.map((p, i) => <ellipse key={p} cx="40" cy="22" rx="10.500" ry="16.500" fill={p} fillOpacity=".85" className="mix-blend-multiply" transform={`rotate(${i * 45} 40 40)`} />)}
      </App80>
      <App80 c="bg-linear-to-b from-[#86ef80] to-[#5abf49]">
        <rect x="12" y="23" width="39" height="35" rx="8" fill="#eef7ec" /><path d="M53 36.500L64 26q3-2 3 1v27q0 3-3 1L53 44z" fill="#cfeac8" />
      </App80>
      <App80 c="bg-[#f8f8f8]">
        <rect width="80" height="25" fill="#e5594d" />
        <text x="40" y="19" textAnchor="middle" fontSize="15.500" fontWeight="600" fill="#fff" fontFamily="Inter">SEP</text>
        <text x="40" y="68" textAnchor="middle" fontSize="49" fontWeight="300" fill="#222" fontFamily="Inter">6</text>
      </App80>
      <App80 c="bg-transparent">
        <path d="M70 10q10 2 10 14v5H70z" fill="#ccc" /><path d="M70 29h10v13H70z" fill="#5cb8f0" /><path d="M70 42h10v14H70z" fill="#f09030" /><path d="M70 56h10q0 14-10 16z" fill="#6cd860" />
        <rect width="78" height="80" rx="18" fill="#a98450" /><path d="M4.500 4v72" stroke="#7d5c31" strokeWidth="1.500" /><circle cx="41" cy="40" r="24.500" fill="none" stroke="#836238" strokeWidth="1.600" /><ellipse cx="41" cy="34.500" rx="8.500" ry="9.500" fill="#84633a" /><path d="M23 56c4-10 32-10 36 0-9 11-27 11-36 0z" fill="#84633a" />
      </App80>
      <App80 c="bg-linear-to-b from-white to-[#f3f2f0]">
        {["#3478f6", "#e5493a", "#ef9a38"].map((p, i) => <g key={p}><circle cx="15.500" cy={20.500 + i * 20} r="5.900" fill="#fff" stroke={p} strokeWidth="1.500" /><circle cx="15.500" cy={20.500 + i * 20} r="4" fill={p} /><path d={`M30 ${20.500 + i * 20}h42`} stroke="#b9b8be" strokeWidth="1.800" /></g>)}
      </App80>
      <App80 dot c="bg-linear-to-b from-[#f6f5f2] to-[#e3e2dd]">
        <rect width="80" height="21" fill="#f7d051" /><path d="M0 21.500h80" stroke="#9a9488" strokeWidth="1.500" /><path d="M0 24.500h80" stroke="#bbb" strokeWidth="1.500" strokeDasharray="1.500 1.500" /><path d="M0 40.500h80M0 61h80" stroke="#d2d1d4" strokeWidth="1.500" />
      </App80>
      <App80 c="bg-linear-to-b from-[#ea6678] to-[#e8383e]">
        <path d="M29 18l30-6v10l-27 5.500V58q0 8-7.500 8.500-8.500 0-8.500-6 0-6 9-7l4-1zM59 12v41q0 8-7.500 8.500-8 0-8-6 0-6 8.500-7l4-1V20z" fill="#fff" />
      </App80>
      <App80 c="bg-linear-to-b from-[#b763ea] to-[#7428ae]">
        <g fill="none" stroke="#fff" strokeWidth="3.200"><path d="M29 62a27 27 0 1 1 22 0" /><path d="M29 50a17 17 0 1 1 22 0" /></g><circle cx="40" cy="35" r="6.300" fill="#fff" /><path d="M33.500 50q0-5 6.500-5t6.500 5L44 68q-.8 3-4 3t-4-3z" fill="#fff" />
      </App80>
      <App80 c="bg-linear-to-b from-[#5dc6fa] to-[#2f60e8]">
        <path d="M20 11.500h40l4 24h-48z" fill="#f2f4f7" /><path d="M19 31h42" stroke="#9fb4c6" strokeWidth="2" /><circle cx="40" cy="21" r="7.500" fill="#56b3ea" /><path d="M40 21v-7.500a7.500 7.500 0 0 0-7 10z" fill="#df4a6c" /><path d="M40 21l-7 3a7.500 7.500 0 0 0 11 3z" fill="#6cc25e" /><path d="M40 21l-7.500 0 1.500 4z" fill="#f1ad3f" /><path d="M38.500 36h3.500v30h-3.500z" fill="#cfd9e4" /><path d="M27 66h26v3.500H27z" fill="#dfe5ec" />
      </App80>
      <App80 c="bg-linear-to-b from-[#90f07a] to-[#5fcf45]">
        <g fill="#f3f6f3"><rect x="15" y="53" width="10" height="16" rx="2" /><rect x="28.500" y="38" width="10" height="31" rx="2" /><rect x="42.500" y="12" width="10" height="57" rx="2" /><rect x="56" y="27" width="10" height="42" rx="2" /></g>
      </App80>
      <App80 c="bg-linear-to-b from-[#f5b54b] to-[#ee8a3a]">
        <path d="M13 68l2.500-9L55 18q8-5 10-2-0 5-4.500 11L22 63z" fill="#f5f5f5" /><path d="M13 68l2-7 4 4z" fill="#8a6a4a" /><path d="M38 37l5 5" stroke="#999" strokeWidth="2" /><path d="M24 68.500h43" stroke="#f9cfa4" strokeWidth="2.600" strokeLinecap="round" />
      </App80>
      <App80 c="bg-linear-to-b from-[#52b4ef] to-[#2a5bd6]">
        <g stroke="#f1f5fb" strokeWidth="7" strokeLinecap="round"><path d="M15.500 49.500h49" /><path d="M43.500 18.500L28.500 46" /><path d="M36.500 18.500l23 42" /><path d="M21.500 58.500l-1.500 2.500" /></g>
      </App80>
      <div className="relative">
        <App80 c="bg-linear-to-b from-[#d5dfe5] to-[#918f8c]">
          <circle cx="40" cy="40" r="34.500" fill="#2c2e30" /><circle cx="40" cy="40" r="30" fill="none" stroke="#9ea3a6" strokeWidth="5" strokeDasharray="1.800 1.300" /><circle cx="40" cy="40" r="25.500" fill="#55595b" stroke="#b2b6b8" strokeWidth="4.500" /><circle cx="40" cy="40" r="15" fill="none" stroke="#36393a" strokeWidth="5" /><path d="M40 40h25M40 40L27.500 18.500M40 40L27.500 61.500" stroke="#b4b8ba" strokeWidth="4.500" /><circle cx="40" cy="40" r="3.500" fill="#777" />
        </App80>
        <div className={"absolute left-[54px] top-[-10px] flex size-[38px] items-center justify-center rounded-full bg-[#de4b42] text-[20px] text-white " + SYS}>1</div>
      </div>
      <div className="ml-[10px] mr-[36px] mt-[-2px] h-[94px] w-[2px] shrink-0 bg-[#7a4e96]" />
      <App80 dot c="bg-[#f1f0f5]">
        <circle cx="40" cy="40" r="34.500" fill="#4fa556" /><path d="M69.900 23A34.500 34.500 0 0 1 40 74.500L55 47 52 23z" fill="#f3c244" /><path d="M11.500 22A34.500 34.500 0 0 1 69.900 23H40z" fill="#d9493b" /><path d="M11 22.500L25 49l15-9V22z" fill="#d9493b" /><circle cx="40" cy="39.500" r="17" fill="#fff" /><circle cx="40" cy="39.500" r="13.500" fill="#3f79e6" />
      </App80>
      <App80 dot c="bg-white">
        <path d="M11.500 48.500l5 6.500 38-35V12.500z" fill="#2a66ac" /><path d="M16.500 25.500l-5 6.500 43 37V55z" fill="#3079c6" /><path d="M54.500 12.500L68.500 18v45l-14 6z" fill="#4796e6" />
      </App80>
      <App80 dot c="bg-linear-to-b from-[#cfe4ef] to-[#8d8886]">
        <rect x="3" y="3.500" width="74" height="74" rx="16" fill="#000" /><rect x="9" y="10" width="62" height="61" rx="10" fill="#262626" /><path d="M15 16.500l8 4.500-8 4.500M28 30.500h11" fill="none" stroke="#fff" strokeWidth="2.800" />
      </App80>
      <div className="ml-[10px] mr-[34px] mt-[-2px] h-[94px] w-[2px] shrink-0 bg-[#573f75]" />
      <svg viewBox="0 0 84 56" className="mt-[13px] h-[56px] w-[84px] shrink-0">
        <path d="M4 0h75v12H4z" fill="#d8d8da" /><path d="M4 0h5v8H4z" fill="#77757c" /><path d="M58 0h20v8H58z" fill="#efeff1" /><rect y="7" width="84" height="48" rx="2" fill="#f7f7f8" />
        <text x="42.500" y="33" textAnchor="middle" fontSize="5" fontWeight="700" fill="#222" fontFamily="Liberation Serif">Hashicorp Vault</text><text x="42.500" y="37" textAnchor="middle" fontSize="2.600" fill="#222" fontFamily="Liberation Serif">By Deepak Pathak</text>
      </svg>
      <svg viewBox="0 0 72 92" className="ml-[30px] mt-[-8px] h-[92px] w-[72px] shrink-0">
        <defs><linearGradient id="can"><stop offset="0" stopColor="#8b8d8f" /><stop offset=".3" stopColor="#6a6d70" /><stop offset=".7" stopColor="#5c5f63" /><stop offset="1" stopColor="#9a9c9e" /></linearGradient></defs>
        <path d="M0 13q36 12 71 0L62 84q-2 7-26 8-24-1-26-8z" fill="url(#can)" />
        <path d="M2 14L8 4l8 2 8-6 8 6 9-4 8 0 7 6 8-2 5 10Q36 26 2 14z" fill="#e3e2e0" /><path d="M23 10l8-2 4 6-8 3zM44 7l9 9-8 3z" fill="#4c4a48" /><path d="M26 9l7 2-2 4z" fill="#3fb5d4" /><path d="M34 12l6 8-5 0z" fill="#dd9a3e" /><path d="M52 11l6 6M12 10l8 7M61 9l-3 8" stroke="#8a8886" strokeWidth="1.500" />
        <path d="M1 14q35 16 69 0" fill="none" stroke="#a9abad" strokeWidth="1.600" />
      </svg>
    </div>
  );
}

export default function App() {
  return (
    <div className="relative flex h-[1800px] w-[2880px] flex-col overflow-hidden bg-[linear-gradient(90deg,#0c0224_0%,#110338_50%,#17043f_64.900%,#3c0a5c_65%,#1c0540_82%,#14023a_100%)]">
      <MenuBar />
      <div className="mt-[1px] shrink-0 rounded-[22px] bg-[#0c0c0c]">
        <div className="relative flex h-[1597px] flex-col overflow-hidden rounded-[22px] bg-[#37353a] pt-[1px]">
          <Toolbar />
          <Tabs />
          <AwsNav />
          <div className={"flex min-h-0 flex-1 " + EMBER}>
            <Sidebar />
            <Main />
          </div>
          <Footer />
          <div className="pointer-events-none absolute inset-0 z-20 rounded-[22px] border-2 border-[#ffffff38] border-t-[#ffffff55]" />
        </div>
        <div className="flex h-[12px] items-start overflow-hidden rounded-b-[18px] border-b-2 border-[#2a2a2a] font-['Roboto'] text-[36px] leading-none text-[#8a8a8a]">
          <div className="ml-[120px] h-[12px] w-[1790px] bg-[#111]" />
          <div className="ml-[46px] h-[12px] w-[2px] bg-[#222]" />
          <div className="ml-[32px] flex h-[12px] w-[125px] bg-[#545456] px-[25px]"><div className="w-[75px] bg-[#1c1210] px-[13px]"><div className="h-[12px] rounded-t-[8px] bg-[#5c3f33]" /></div></div>
          <span className="ml-[24px] mt-[-5px] whitespace-nowrap tracking-[0.400px]">Main Hoon Na</span>
        </div>
      </div>
      <div className="h-[2px] shrink-0" />
      <Dock />
    </div>
  );
}
